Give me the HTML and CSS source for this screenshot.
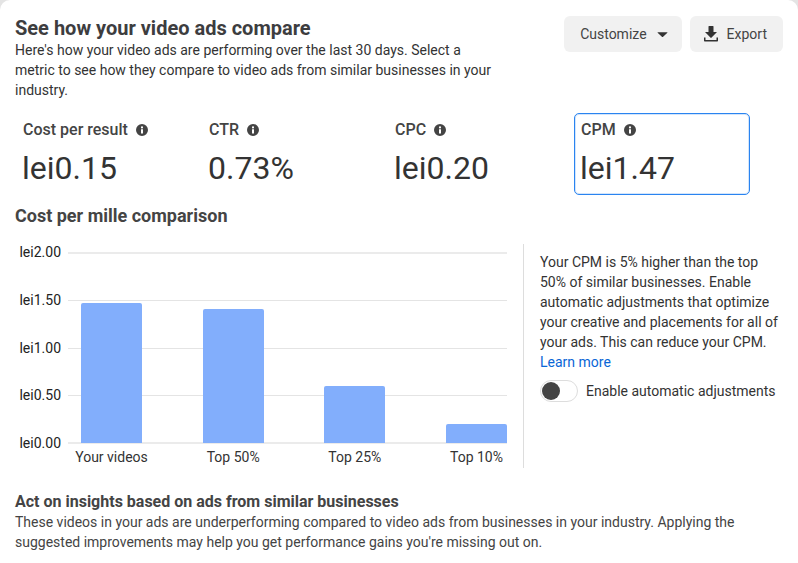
FILE: index.html
```html
<!DOCTYPE html>
<html lang="en">
<head>
    <meta charset="UTF-8">
    <meta name="viewport" content="width=device-width, initial-scale=1.0">
    <title>See how your video ads compare</title>
    <link rel="stylesheet" href="styles.css">
</head>
<body>
<div class="card">
    <div class="top-row">
        <div class="intro">
            <h1>See how your video ads compare</h1>
            <p>Here's how your video ads are performing over the last 30 days. Select a metric to see how they compare to video ads from similar businesses in your industry.</p>
        </div>
        <div class="actions">
            <button class="btn">Customize
                <svg class="caret" width="11" height="11" viewBox="0 0 12 12"><path d="M1 3.500h10a.4.4 0 0 1 .3.700L6.400 8.600a.6.6 0 0 1-.8 0L.7 4.200a.4.4 0 0 1 .3-.7z"/></svg>
            </button>
            <button class="btn btn-export">
                <svg width="16" height="18" viewBox="0 0 16 18"><path d="M6 1h4a.5.5 0 0 1 .5.5V7H14L8.600 12.600a.8.8 0 0 1-1.200 0L2 7h3.500V1.500A.5.5 0 0 1 6 1z"/><path d="M1 12.500h1.500v2.500h11v-2.500H15v3.300a.7.7 0 0 1-.7.700H1.700a.7.700 0 0 1-.7-.700z"/></svg>
                Export
            </button>
        </div>
    </div>

    <div class="metrics">
        <div class="metric">
            <div class="metric-label">Cost per result <svg class="info" viewBox="0 0 12 12"><use href="#info-icon"/></svg></div>
            <div class="metric-value">lei0.15</div>
        </div>
        <div class="metric">
            <div class="metric-label">CTR <svg class="info" viewBox="0 0 12 12"><use href="#info-icon"/></svg></div>
            <div class="metric-value">0.73%</div>
        </div>
        <div class="metric">
            <div class="metric-label">CPC <svg class="info" viewBox="0 0 12 12"><use href="#info-icon"/></svg></div>
            <div class="metric-value">lei0.20</div>
        </div>
        <div class="metric selected">
            <div class="metric-label">CPM <svg class="info" viewBox="0 0 12 12"><use href="#info-icon"/></svg></div>
            <div class="metric-value">lei1.47</div>
        </div>
    </div>

    <h2>Cost per mille comparison</h2>

    <div class="compare">
        <div class="chart">
            <div class="y-axis">
                <span>lei2.00</span>
                <span>lei1.50</span>
                <span>lei1.00</span>
                <span>lei0.50</span>
                <span>lei0.00</span>
            </div>
            <div class="plot">
                <div class="grid">
                    <i></i><i></i><i></i><i></i><i></i>
                </div>
                <div class="bars">
                    <div class="bar" style="height: 73.5%"></div>
                    <div class="bar" style="height: 70%"></div>
                    <div class="bar" style="height: 30%"></div>
                    <div class="bar" style="height: 10%"></div>
                </div>
            </div>
            <div class="x-axis">
                <span>Your videos</span>
                <span>Top 50%</span>
                <span>Top 25%</span>
                <span>Top 10%</span>
            </div>
        </div>
        <div class="advice">
            <p>Your CPM is 5% higher than the top 50% of similar businesses. Enable automatic adjustments that optimize your creative and placements for all of your ads. This can reduce your CPM. <a href="#">Learn more</a></p>
            <div class="toggle-row">
                <span class="toggle"><span class="knob"></span></span>
                <span>Enable automatic adjustments</span>
            </div>
        </div>
    </div>

    <div class="insights">
        <h3>Act on insights based on ads from similar businesses</h3>
        <p>These videos in your ads are underperforming compared to video ads from businesses in your industry. Applying the suggested improvements may help you get performance gains you're missing out on.</p>
    </div>
</div>

<svg class="defs" width="0" height="0">
    <symbol id="info-icon" viewBox="0 0 12 12">
        <path fill-rule="evenodd" d="M6 0a6 6 0 1 1 0 12A6 6 0 0 1 6 0zM5 5.200v4.300h2V5.200zM6 2.300a1.100 1.100 0 1 0 0 2.200 1.100 1.100 0 0 0 0-2.200z"/>
    </symbol>
</svg>
</body>
</html>
```

FILE: styles.css
```css
/* General Styles */
html {
    background-color: #e4e4e4;
}

body {
    font-family: 'Roboto', sans-serif;
    margin: 0;
    color: #333;
    font-size: 14px;
    line-height: 20px;
}

.card {
    width: 798px;
    height: 563px;
    padding: 16px 15px 0;
    box-sizing: border-box;
    overflow: hidden;
    background-color: #fff;
    border-radius: 10px 10px 0 0;
}

.defs {
    position: absolute;
}

/* Heading and buttons */
.top-row {
    display: flex;
    justify-content: space-between;
    align-items: flex-start;
}

.intro {
    width: 480px;
}

h1 {
    font-size: 20px;
    font-weight: 700;
    line-height: 24px;
    margin: 0;
    color: #3d3d3f;
}

.intro p {
    margin: 0;
}

.actions {
    display: flex;
    gap: 8px;
}

.btn {
    display: flex;
    align-items: center;
    height: 36px;
    padding: 0 14px 0 16px;
    border: none;
    border-radius: 6px;
    background-color: #f1f1f1;
    color: #444;
    font-family: inherit;
    font-size: 14px;
}

.btn .caret {
    margin-left: 10px;
    fill: #333;
}

.btn-export {
    padding: 0 16px 0 13px;
}

.btn-export svg {
    margin-right: 8px;
    fill: #333;
}

/* Metrics */
.metrics {
    display: grid;
    grid-template-columns: 186px 186px 187px 176px;
    margin-top: 13px;
}

.metric {
    height: 82px;
    padding: 7px 8px 0;
    box-sizing: border-box;
}

.selected {
    padding: 6px 6px 0;
    border: 1px solid #2a84f0;
    border-radius: 5px;
    box-shadow: inset 0 0 0 1px #d3e5fb;
}

.metric-label {
    display: flex;
    align-items: center;
    gap: 8px;
    font-size: 16px;
    font-weight: 500;
    color: #444;
}

.info {
    width: 12px;
    height: 12px;
    fill: #444;
}

.metric-value {
    font-size: 32px;
    line-height: 40px;
    margin: 8px 0 0 -1px;
    color: #333;
}

h2 {
    font-size: 18px;
    font-weight: 700;
    line-height: 20px;
    margin: 11px 0 0;
    color: #444;
}

/* Chart */
.compare {
    display: flex;
    margin-top: 18px;
}

.chart {
    display: grid;
    grid-template-columns: 46px 439px;
    grid-template-rows: 200px auto;
    column-gap: 7px;
    width: 508px;
    height: 224px;
    border-right: 1px solid #ddd;
}

.y-axis {
    display: flex;
    flex-direction: column;
    justify-content: space-between;
    margin: -2px 0 -9px;
    color: #222;
    text-align: right;
}

.plot {
    position: relative;
    margin-top: 8px;
}

.grid {
    display: flex;
    flex-direction: column;
    justify-content: space-between;
    height: 100%;
}

.grid i {
    display: block;
    height: 1px;
    background-color: #e4e4e4;
}

.grid i:first-child,
.grid i:last-child {
    height: 2px;
    background-color: #ebebeb;
}

.bars {
    position: absolute;
    top: 0;
    bottom: 1px;
    left: 0;
    right: 0;
    display: flex;
    justify-content: space-between;
    align-items: flex-end;
    padding-left: 13px;
}

.bar {
    width: 61px;
    background-color: #82aefc;
    border-radius: 2px 2px 0 0;
}

.x-axis {
    grid-column: 2;
    display: flex;
    justify-content: space-between;
    padding-left: 13px;
    margin-top: 3px;
}

.x-axis span {
    display: flex;
    justify-content: center;
    width: 61px;
    white-space: nowrap;
}

/* Side text */
.advice {
    padding: 8px 0 0 16px;
    width: 240px;
}

.advice p {
    margin: 0;
    color: #333;
}

.advice a {
    color: #0a66d6;
    text-decoration: none;
    display: inline-block;
}

.toggle-row {
    display: flex;
    align-items: center;
    gap: 8px;
    margin-top: 8px;
    white-space: nowrap;
}

.toggle {
    display: flex;
    align-items: center;
    width: 36px;
    height: 20px;
    border: 1px solid #ddd;
    border-radius: 11px;
}

.knob {
    width: 18px;
    height: 18px;
    margin-left: 1px;
    border-radius: 50%;
    background-color: #444;
}

/* Bottom text */
.insights {
    margin-top: 24px;
}

h3 {
    font-size: 16px;
    font-weight: 700;
    line-height: 20px;
    margin: 0;
    color: #444;
}

.insights p {
    margin: 0;
    color: #444;
}
```
